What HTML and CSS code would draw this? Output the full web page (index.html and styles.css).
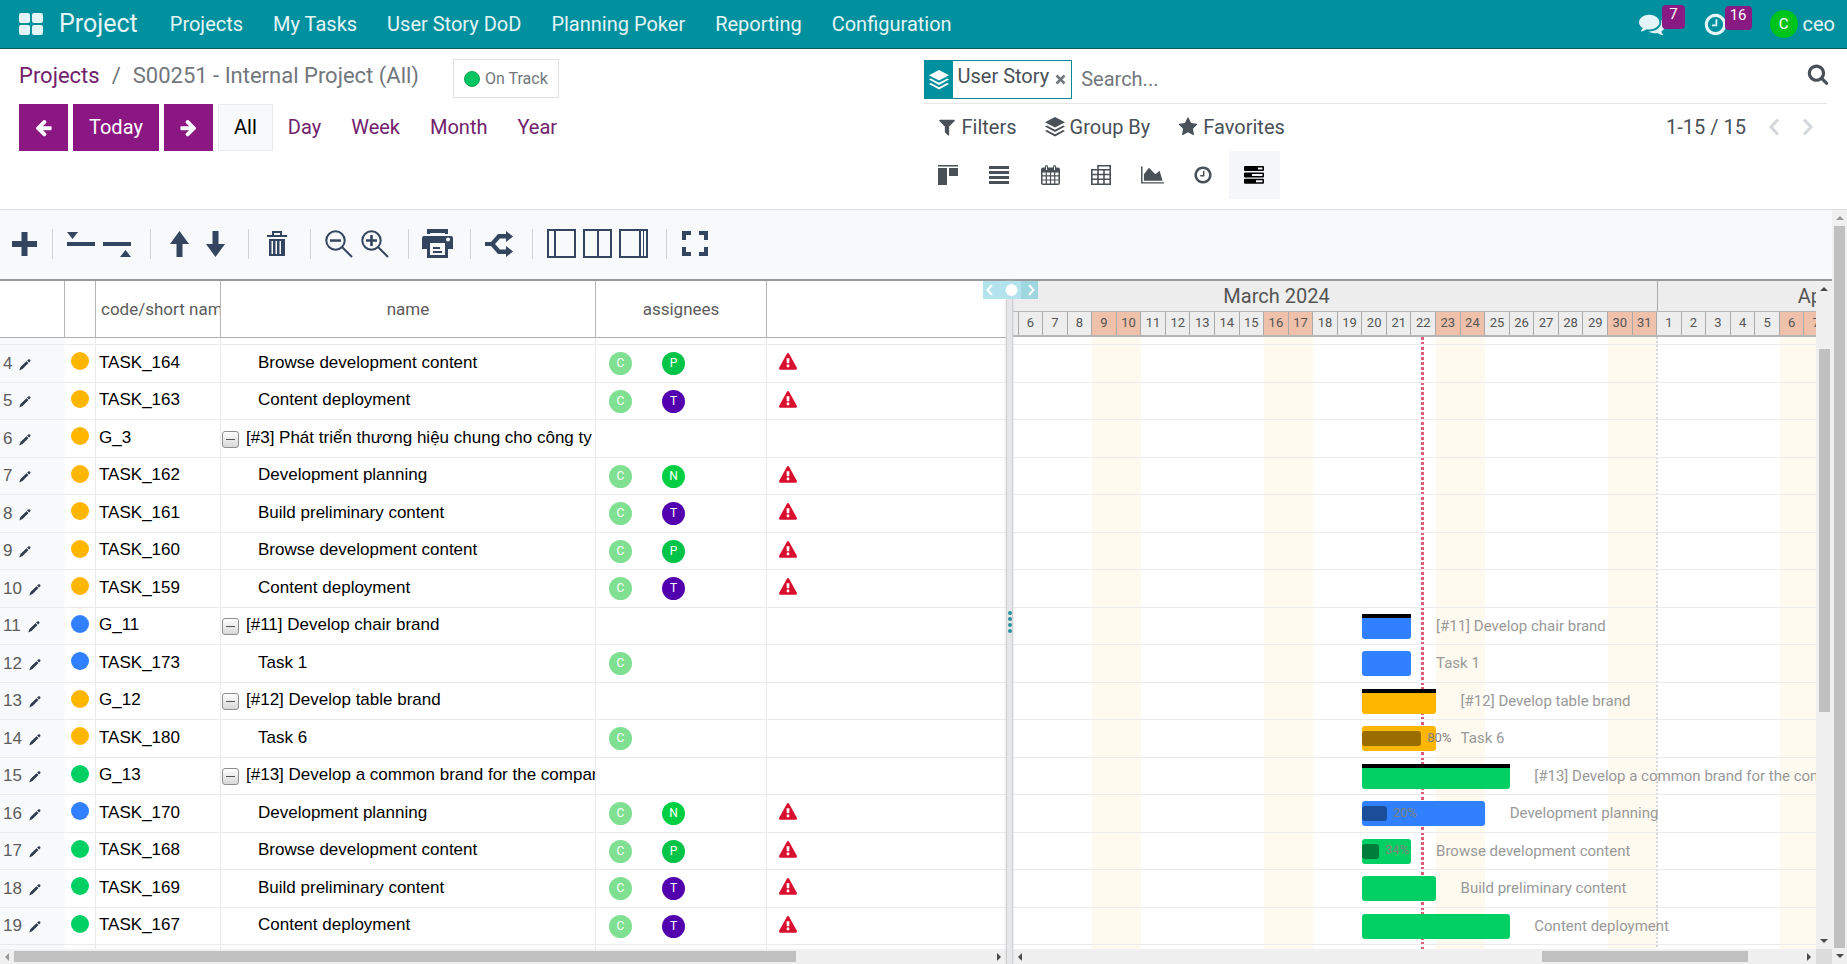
FILE: index.html
```html
<!DOCTYPE html>
<html lang="en">
<head>
<meta charset="utf-8">
<title>Project - S00251 - Internal Project</title>
<link rel="stylesheet" href="styles.css">
</head>
<body>
<svg class="sprite" aria-hidden="true">
  <symbol id="i-arrow" viewBox="0 0 1792 1792"><path d="M1664 896v128q0 53-32.5 90.5t-84.500 37.500h-704l293 294q38 36 38 90t-38 90l-75 76q-37 37-90 37-52 0-91-37l-651-652q-37-37-37-90 0-52 37-91l651-650q38-38 91-38 52 0 90 38l75 74q38 38 38 91t-38 91l-293 293h704q52 0 84.500 37.500t32.500 90.500z"/></symbol>
  <symbol id="i-layers" viewBox="0 0 20 20"><path d="M10 0L20 5.200 10 10.500 0 5.200z"/><path d="M1.800 8.600L0 9.600l10 5.300 10-5.300-1.800-1L10 12.800z"/><path d="M1.800 13L0 14l10 5.500L20 14l-1.800-1L10 17.300z"/></symbol>
  <symbol id="i-pencil" viewBox="0 0 12 12"><path d="M9.200.6q.9-.9 1.800 0t.1 1.900l-1 1-2-1.900zM7.500 2.200l2 1.900-6 6-3.200 1.500 1.200-3.500z"/></symbol>
  <symbol id="i-warn" viewBox="0 0 1792 1792"><path d="M1024 1375v-190q0-14-9.500-23.500t-22.500-9.500h-192q-13 0-22.500 9.500t-9.500 23.500v190q0 14 9.500 23.500t22.500 9.500h192q13 0 22.500-9.500t9.500-23.500zm-2-374l18-459q0-12-10-19-13-11-24-11h-220q-11 0-24 11-10 7-10 21l17 457q0 10 10 16.500t24 6.500h185q14 0 23.500-6.500t10.500-16.500zm-14-934l768 1408q35 63-2 126-17 29-46.500 46t-63.500 17h-1536q-34 0-63.500-17t-46.500-46q-37-63-2-126l768-1408q17-31 47-49t65-18 65 18 47 49z"/></symbol>
  <symbol id="i-clock" viewBox="0 0 1792 1792"><path d="M1024 544v448q0 14-9 23t-23 9h-320q-14 0-23-9t-9-23v-64q0-14 9-23t23-9h224v-352q0-14 9-23t23-9h64q14 0 23 9t9 23zm416 352q0-148-73-273t-198-198-273-73-273 73-198 198-73 273 73 273 198 198 273 73 273-73 198-198 73-273zm224 0q0 209-103 385.500t-279.500 279.500-385.500 103-385.500-103-279.500-279.500-103-385.500 103-385.500 279.500-279.500 385.500-103 385.500 103 279.500 279.500 103 385.500z"/></symbol>
  <symbol id="i-tri" viewBox="0 0 8 8"><path d="M6 0v8L2 4z"/></symbol>
</svg>

<header class="navbar">
  <button class="apps" aria-label="Home menu"><svg width="24" height="22" viewBox="0 0 24 22"><rect width="11" height="10" rx="2"/><rect x="13" width="11" height="10" rx="2"/><rect y="12" width="11" height="10" rx="2"/><rect x="13" y="12" width="11" height="10" rx="2"/></svg></button>
  <a class="brand" href="#">Project</a>
  <nav class="menu"><a href="#">Projects</a><a href="#">My Tasks</a><a href="#">User Story DoD</a><a href="#">Planning Poker</a><a href="#">Reporting</a><a href="#">Configuration</a></nav>
  <div class="systray">
    <button class="tray" aria-label="Messages"><svg width="26" height="26" viewBox="0 0 1792 1792"><path d="M1408 768q0 139-94 257t-256.500 186.500-353.500 68.500q-86 0-176-16-124 88-278 128-36 9-86 16h-3q-11 0-20.500-8t-11.500-21q-1-3-1-6.500t.5-6.500 2-6l2.500-5 3.500-5.500 4-5 4.500-5 4-4.500q5-6 23-25t26-29.500 22.500-29 25-38.500 20.500-44q-124-72-195-177t-71-224q0-139 94-257t256.500-186.500 353.500-68.500 353.500 68.500 256.500 186.500 94 257zm384 256q0 120-71 224.500t-195 176.500q10 24 20.500 44t25 38.500 22.500 29 26 29.500 23 25q1 1 4 4.500t4.500 5 4 5 3.500 5.500l2.500 5 2 6 .5 6.500-1 6.500q-3 14-13 22t-22 7q-50-7-86-16-154-40-278-128-90 16-176 16-271 0-472-132 58 4 88 4 161 0 309-45t264-129q125-92 192-212t67-254q0-77-23-152 129 71 204 178t75 230z"/></svg><span class="badge">7</span></button>
    <button class="tray" aria-label="Activities"><svg width="25" height="25"><use href="#i-clock"/></svg><span class="badge">16</span></button>
    <button class="user"><span class="avatar-me">C</span>ceo</button>
  </div>
</header>

<section class="control">
  <div class="control-left">
    <div class="crumbs"><a href="#">Projects</a><span class="slash">/</span><span>S00251 - Internal Project (All)</span><button class="status"><i></i>On Track</button></div>
    <div class="scales">
      <button class="primary" aria-label="Previous"><svg width="19" height="19"><use href="#i-arrow"/></svg></button>
      <button class="primary">Today</button>
      <button class="primary flip" aria-label="Next"><svg width="19" height="19"><use href="#i-arrow"/></svg></button>
      <div class="scale-group"><button class="scale active">All</button><button class="scale">Day</button><button class="scale">Week</button><button class="scale">Month</button><button class="scale">Year</button></div>
    </div>
  </div>
  <div class="control-right">
    <div class="search">
      <div class="facet"><span class="facet-icon"><svg width="20" height="20"><use href="#i-layers"/></svg></span><span class="facet-text">User Story</span><button class="facet-x" aria-label="Remove"><svg width="11" height="11" viewBox="0 0 11 11"><path d="M1.500 1.500l8 8m0-8l-8 8" stroke="currentColor" stroke-width="2.500"/></svg></button></div>
      <input type="text" placeholder="Search..." aria-label="Search">
      <button class="search-go" aria-label="Search"><svg width="22" height="22" viewBox="0 0 1792 1792"><path d="M1216 832q0-185-131.500-316.500t-316.500-131.500-316.500 131.500-131.500 316.500 131.500 316.500 316.500 131.500 316.500-131.500 131.500-316.500zm512 832q0 52-38 90t-90 38q-54 0-90-38l-343-342q-179 124-399 124-143 0-273.500-55.500t-225-150-150-225-55.500-273.500 55.500-273.500 150-225 225-150 273.500-55.500 273.500 55.500 225 150 150 225 55.500 273.500q0 220-124 399l343 343q37 37 37 90z"/></svg></button>
    </div>
    <div class="options">
      <button><svg width="20" height="20" viewBox="0 0 1792 1792"><path d="M1595 295q17 41-14 70l-493 493v742q0 42-39 59-13 5-25 5-27 0-45-19l-256-256q-19-19-19-45v-486l-493-493q-31-29-14-70 17-39 59-39h1280q42 0 59 39z"/></svg>Filters</button>
      <button><svg width="20" height="20"><use href="#i-layers"/></svg>Group By</button>
      <button><svg width="20" height="20" viewBox="0 0 1792 1792"><path d="M1728 647q0 22-26 48l-363 354 86 500q1 7 1 20 0 21-10.500 35.500t-30.500 14.500q-19 0-40-12l-449-236-449 236q-22 12-40 12-21 0-31.500-14.500t-10.500-35.500q0-6 2-20l86-500-364-354q-25-27-25-48 0-37 56-46l502-73 225-455q19-41 49-41t49 41l225 455 502 73q56 9 56 46z"/></svg>Favorites</button>
      <div class="pager"><span>1-15 / 15</span><button aria-label="Previous page"><svg width="12" height="18" viewBox="0 0 12 18"><path d="M10 1.500L3 9l7 7.500"/></svg></button><button aria-label="Next page"><svg width="12" height="18" viewBox="0 0 12 18"><path d="M2 1.500L9 9l-7 7.500"/></svg></button></div>
    </div>
    <div class="views">
      <button aria-label="Kanban"><svg width="20" height="20" viewBox="0 0 20 20"><path d="M0 0h20v1.500H0zM0 3h9v17H0zM11 3h9v8h-9z"/></svg></button>
      <button aria-label="List"><svg width="20" height="18" viewBox="0 0 20 18"><path d="M0 0h20v3H0zM0 5h20v3H0zM0 10h20v3H0zM0 15h20v3H0z"/></svg></button>
      <button aria-label="Calendar"><svg width="19" height="20" viewBox="0 0 19 20"><path fill-rule="evenodd" d="M2 2.500h2V1.500Q4 0 5.500 0T7 1.500v1h5v-1Q12 0 13.500 0T15 1.500v1h2q2 0 2 2V18q0 2-2 2H2q-2 0-2-2V4.500q0-2 2-2zM1.500 7.500v2.700h3.200V7.500zm4.400 0v2.700h3V7.500zm4.200 0v2.700h3V7.500zm4.200 0v2.700h3.200V7.500zM1.500 11.400v3h3.200v-3zm4.400 0v3h3v-3zm4.200 0v3h3v-3zm4.200 0v3h3.200v-3zM1.500 15.600v2.900h3.200v-2.900zm4.400 0v2.900h3v-2.900zm4.200 0v2.900h3v-2.900zm4.200 0v2.900h3.200v-2.900zM5 1.500V5h1V1.500zm8 0V5h1V1.500z"/></svg></button>
      <button aria-label="Pivot"><svg width="20" height="20" viewBox="0 0 20 20"><path d="M7 4.500V.8h12.200v18.400H.8V4.800h18.400M.8 9.500h18.400M.8 14.300h18.400M7 4.500v14.700M13 4.500v14.700" fill="none" stroke="currentColor" stroke-width="1.600"/></svg></button>
      <button aria-label="Graph"><svg width="23" height="20" viewBox="0 0 2048 1792"><path d="M2048 1536v128h-2048v-1536h128v1408h1920zm-384-1024l256 896h-1664v-576l448-576 576 576z"/></svg></button>
      <button aria-label="Activity"><svg width="20" height="20"><use href="#i-clock"/></svg></button>
      <button class="active" aria-label="Gantt"><svg width="20" height="18" viewBox="0 0 20 18"><path fill-rule="evenodd" d="M1 0h18q1 0 1 1v3q0 1-1 1H1q-1 0-1-1V1q0-1 1-1zm13 1.500v2h4.500v-2zM1 6.500h18q1 0 1 1v3q0 1-1 1H1q-1 0-1-1v-3q0-1 1-1zM8 8v2h10.500V8zM1 12.700h18q1 0 1 1v3q0 1-1 1H1q-1 0-1-1v-3q0-1 1-1zm11 1.500v2h6.500v-2z"/></svg></button>
    </div>
  </div>
</section>

<main class="work">
  <div class="gantt">
    <div class="toolbar">
      <button aria-label="Add"><svg width="25" height="24" viewBox="0 0 25 24"><path d="M9.500 0h6v9H25v6h-9.500v9h-6v-9H0V9h9.500z"/></svg></button>
      <hr>
      <button aria-label="Collapse"><svg width="28" height="26" viewBox="0 0 28 26"><path d="M0 1h11L5.500 8zM0 11h28v4H0z"/></svg></button>
      <button aria-label="Expand"><svg width="28" height="26" viewBox="0 0 28 26"><path d="M0 11h28v4H0zM17 26h11l-5.500-7z"/></svg></button>
      <hr>
      <button aria-label="Move up"><svg width="19" height="26" viewBox="0 0 19 26"><path d="M9.500 0L19 13h-6.500v13h-6V13H0z"/></svg></button>
      <button aria-label="Move down"><svg width="19" height="26" viewBox="0 0 19 26"><path d="M9.500 26L19 13h-6.500V0h-6v13H0z"/></svg></button>
      <hr>
      <button aria-label="Delete"><svg width="20" height="25" viewBox="0 0 20 25"><path fill-rule="evenodd" d="M5 0h10v4h5v2H0V4h5zm2 2v2h6V2zM2 8h16v17H2zm2.500 2v13H6V10zm4 0v13H10V10zm4 0v13H14V10z"/></svg></button>
      <hr>
      <button aria-label="Zoom out"><svg width="28" height="28" viewBox="0 0 28 28"><path class="line" d="M17 17l10 10"/><circle class="line" cx="10.500" cy="10.500" r="9.200"/><path d="M5 9.300h11v2.500H5z"/></svg></button>
      <button aria-label="Zoom in"><svg width="28" height="28" viewBox="0 0 28 28"><path class="line" d="M17 17l10 10"/><circle class="line" cx="10.500" cy="10.500" r="9.200"/><path d="M5 9.300h4.200V5h2.600v4.300H16v2.500h-4.200V16H9.200v-4.200H5z"/></svg></button>
      <hr>
      <button aria-label="Print"><svg width="31" height="29" viewBox="0 0 31 29"><path fill-rule="evenodd" d="M5 0h21v5h-3V4H8v1H5zM2 7h27q2 0 2 2v11h-5v9H5v-9H0V9q0-2 2-2zm24 1.500a2 2 0 1 0 .1 0zM8 14v12h15V14zM11 18h7v2h-7zM11 22h9v2h-9z"/></svg></button>
      <hr>
      <button aria-label="Dependencies"><svg width="28" height="26" viewBox="0 0 28 26"><path d="M0 11h6l7-8h8V0l7 5.500-7 5.500V7.500h-6L10 13l5 5.500h6V15l7 5.500-7 5.500v-3h-8l-7-8H0z"/></svg></button>
      <hr>
      <button aria-label="Grid only"><svg width="29" height="29" viewBox="0 0 29 29"><path class="line" d="M1 1h27v27H1zM8 1v27"/></svg></button>
      <button aria-label="Split"><svg width="29" height="29" viewBox="0 0 29 29"><path class="line" d="M1 1h27v27H1zM15 1v27"/></svg></button>
      <button aria-label="Chart only"><svg width="29" height="29" viewBox="0 0 29 29"><path class="line" d="M1 1h27v27H1z"/><path d="M20 1h2v27h-2zM24 1h1v27h-1z"/></svg></button>
      <hr>
      <button aria-label="Full screen"><svg width="26" height="25" viewBox="0 0 26 25"><path d="M0 0h9v4H4v5H0zM17 0h9v9h-4V4h-5zM0 16h4v5h5v4H0zM22 16h4v9h-9v-4h5z"/></svg></button>
    </div>

    <div class="split">
      <section class="pane">
        <div class="pane-body">
        <table class="grid">
          <colgroup><col class="c-num"><col class="c-dot"><col class="c-code"><col class="c-name"><col class="c-who"><col></colgroup>
          <thead><tr><th></th><th></th><th class="clip">code/short name</th><th>name</th><th>assignees</th><th></th></tr></thead>
          <tbody>
          <tr class="strip"><td></td><td></td><td></td><td></td><td></td><td></td></tr>
          <tr><td>4<svg><use href="#i-pencil"/></svg></td><td><i class="dot yellow"></i></td><td>TASK_164</td><td class="child">Browse development content</td><td><b class="av c">C</b><b class="av p">P</b></td><td><svg class="warn"><use href="#i-warn"/></svg></td></tr>
          <tr><td>5<svg><use href="#i-pencil"/></svg></td><td><i class="dot yellow"></i></td><td>TASK_163</td><td class="child">Content deployment</td><td><b class="av c">C</b><b class="av t">T</b></td><td><svg class="warn"><use href="#i-warn"/></svg></td></tr>
          <tr><td>6<svg><use href="#i-pencil"/></svg></td><td><i class="dot yellow"></i></td><td>G_3</td><td><button class="fold" aria-label="Collapse group"></button>[#3] Phát triển thương hiệu chung cho công ty</td><td></td><td></td></tr>
          <tr><td>7<svg><use href="#i-pencil"/></svg></td><td><i class="dot yellow"></i></td><td>TASK_162</td><td class="child">Development planning</td><td><b class="av c">C</b><b class="av n">N</b></td><td><svg class="warn"><use href="#i-warn"/></svg></td></tr>
          <tr><td>8<svg><use href="#i-pencil"/></svg></td><td><i class="dot yellow"></i></td><td>TASK_161</td><td class="child">Build preliminary content</td><td><b class="av c">C</b><b class="av t">T</b></td><td><svg class="warn"><use href="#i-warn"/></svg></td></tr>
          <tr><td>9<svg><use href="#i-pencil"/></svg></td><td><i class="dot yellow"></i></td><td>TASK_160</td><td class="child">Browse development content</td><td><b class="av c">C</b><b class="av p">P</b></td><td><svg class="warn"><use href="#i-warn"/></svg></td></tr>
          <tr><td>10<svg><use href="#i-pencil"/></svg></td><td><i class="dot yellow"></i></td><td>TASK_159</td><td class="child">Content deployment</td><td><b class="av c">C</b><b class="av t">T</b></td><td><svg class="warn"><use href="#i-warn"/></svg></td></tr>
          <tr><td>11<svg><use href="#i-pencil"/></svg></td><td><i class="dot blue"></i></td><td>G_11</td><td><button class="fold" aria-label="Collapse group"></button>[#11] Develop chair brand</td><td></td><td></td></tr>
          <tr><td>12<svg><use href="#i-pencil"/></svg></td><td><i class="dot blue"></i></td><td>TASK_173</td><td class="child">Task 1</td><td><b class="av c">C</b></td><td></td></tr>
          <tr><td>13<svg><use href="#i-pencil"/></svg></td><td><i class="dot yellow"></i></td><td>G_12</td><td><button class="fold" aria-label="Collapse group"></button>[#12] Develop table brand</td><td></td><td></td></tr>
          <tr><td>14<svg><use href="#i-pencil"/></svg></td><td><i class="dot yellow"></i></td><td>TASK_180</td><td class="child">Task 6</td><td><b class="av c">C</b></td><td></td></tr>
          <tr><td>15<svg><use href="#i-pencil"/></svg></td><td><i class="dot green"></i></td><td>G_13</td><td><button class="fold" aria-label="Collapse group"></button>[#13] Develop a common brand for the company</td><td></td><td></td></tr>
          <tr><td>16<svg><use href="#i-pencil"/></svg></td><td><i class="dot blue"></i></td><td>TASK_170</td><td class="child">Development planning</td><td><b class="av c">C</b><b class="av n">N</b></td><td><svg class="warn"><use href="#i-warn"/></svg></td></tr>
          <tr><td>17<svg><use href="#i-pencil"/></svg></td><td><i class="dot green"></i></td><td>TASK_168</td><td class="child">Browse development content</td><td><b class="av c">C</b><b class="av p">P</b></td><td><svg class="warn"><use href="#i-warn"/></svg></td></tr>
          <tr><td>18<svg><use href="#i-pencil"/></svg></td><td><i class="dot green"></i></td><td>TASK_169</td><td class="child">Build preliminary content</td><td><b class="av c">C</b><b class="av t">T</b></td><td><svg class="warn"><use href="#i-warn"/></svg></td></tr>
          <tr><td>19<svg><use href="#i-pencil"/></svg></td><td><i class="dot green"></i></td><td>TASK_167</td><td class="child">Content deployment</td><td><b class="av c">C</b><b class="av t">T</b></td><td><svg class="warn"><use href="#i-warn"/></svg></td></tr>
          <tr class="strip"><td></td><td></td><td></td><td></td><td></td><td></td></tr>
          </tbody>
        </table>
        </div>
        <div class="hbar"><svg class="faint"><use href="#i-tri"/></svg><div class="track"><i class="thumb" style="margin-left:0%;width:80%"></i></div><svg class="right"><use href="#i-tri"/></svg></div>
      </section>

      <div class="splitter"><div class="dots"><i></i><i></i><i></i><i></i></div>
        <div class="handle"><svg width="55" height="18" viewBox="0 0 55 18"><path fill="#b3e4ee" d="M0 0h38v18H0z"/><path fill="#9fd7e1" d="M38 0h17v18H38z"/><path class="chev" d="M9 4L4.500 9 9 14M46 4l4.500 5-4.500 5"/><circle cx="28.500" cy="9" r="6" fill="#fff"/></svg></div>
      </div>

      <section class="pane">
        <div class="chart-row">
          <div class="chart">
            <div class="canvas">
              <div class="months"><div class="march">March 2024</div><div class="april">April 2024</div></div>
              <div class="days"><span>5</span><span>6</span><span>7</span><span>8</span><span class="off">9</span><span class="off">10</span><span>11</span><span>12</span><span>13</span><span>14</span><span>15</span><span class="off">16</span><span class="off">17</span><span>18</span><span>19</span><span>20</span><span>21</span><span>22</span><span class="off">23</span><span class="off">24</span><span>25</span><span>26</span><span>27</span><span>28</span><span>29</span><span class="off">30</span><span class="off">31</span><span>1</span><span>2</span><span>3</span><span>4</span><span>5</span><span class="off">6</span><span class="off">7</span></div>
              <div class="plan">
                <div class="bands"><i style="grid-column:5/7"></i><i style="grid-column:12/14"></i><i style="grid-column:19/21"></i><i style="grid-column:26/28"></i><i style="grid-column:33/35"></i><i class="month-line" style="grid-column:28/29"></i><i class="today" style="grid-column:18/19"></i></div>
                <div class="rows">
                  <div class="row strip"></div>
                  <div class="row"></div><div class="row"></div><div class="row"></div><div class="row"></div><div class="row"></div><div class="row"></div><div class="row"></div>
                  <div class="row"><div class="bar blue group" style="grid-column:16/18"></div><span class="label" style="grid-column-start:19">[#11] Develop chair brand</span></div>
                  <div class="row"><div class="bar blue" style="grid-column:16/18"></div><span class="label" style="grid-column-start:19">Task 1</span></div>
                  <div class="row"><div class="bar yellow group" style="grid-column:16/19"></div><span class="label" style="grid-column-start:20">[#12] Develop table brand</span></div>
                  <div class="row"><div class="bar yellow" style="grid-column:16/19"><i style="width:80%"></i><small>80%</small></div><span class="label" style="grid-column-start:20">Task 6</span></div>
                  <div class="row"><div class="bar green group" style="grid-column:16/22"></div><span class="label" style="grid-column-start:23">[#13] Develop a common brand for the company</span></div>
                  <div class="row"><div class="bar blue" style="grid-column:16/21"><i style="width:20%"></i><small>20%</small></div><span class="label" style="grid-column-start:22">Development planning</span></div>
                  <div class="row"><div class="bar green" style="grid-column:16/18"><i style="width:34%"></i><small>34%</small></div><span class="label" style="grid-column-start:19">Browse development content</span></div>
                  <div class="row"><div class="bar green" style="grid-column:16/19"></div><span class="label" style="grid-column-start:20">Build preliminary content</span></div>
                  <div class="row"><div class="bar green" style="grid-column:16/22"></div><span class="label" style="grid-column-start:23">Content deployment</span></div>
                </div>
              </div>
            </div>
          </div>
          <div class="vbar"><svg class="up"><use href="#i-tri"/></svg><div class="track"><i class="thumb" style="margin-top:52px;height:57%"></i></div><svg class="down"><use href="#i-tri"/></svg></div>
        </div>
        <div class="hbar"><svg><use href="#i-tri"/></svg><div class="track"><i class="thumb" style="margin-left:66.500%;width:26.500%"></i></div><svg class="right"><use href="#i-tri"/></svg><i class="corner"></i></div>
      </section>
    </div>
  </div>
  <div class="vbar page"><svg class="up faint"><use href="#i-tri"/></svg><div class="track"><i class="thumb" style="margin-top:0;height:100%"></i></div><svg class="down"><use href="#i-tri"/></svg></div>
</main>
</body>
</html>
```

FILE: styles.css
```css
* { box-sizing: border-box; }
body { margin: 0; height: 100vh; display: flex; flex-direction: column; overflow: hidden; font: 20px/30px Roboto, sans-serif; color: #495057; background: #fff; }
button { font: inherit; color: inherit; background: none; border: 0; padding: 0; margin: 0; cursor: pointer; }
a { color: inherit; text-decoration: none; }
svg { display: block; fill: currentColor; flex: none; }
.sprite { position: absolute; width: 0; height: 0; }

/* Top navigation */
.navbar { flex: none; display: flex; align-items: center; height: 49px; background: #00909e; border-bottom: 1px solid #0d5c63; color: #e3f5f7; padding: 0 12px 0 19px; }
.brand { font-size: 25px; margin: 0 17px 0 16px; }
.menu { display: flex; flex: 1; }
.menu a { padding: 0 15px; }
.systray { display: flex; align-items: center; }
.tray { display: flex; align-items: center; margin-right: 18px; }
.badge { align-self: flex-start; background: #8a1a83; color: #fff; font-size: 15px; line-height: 18px; height: 24px; padding: 0 7px; margin: -6px 0 0 -3px; border-radius: 4px; }
.tray + .tray .badge { padding: 0 5px; }
.user { display: flex; align-items: center; gap: 5px; }
.avatar-me { width: 28px; height: 28px; border-radius: 50%; background: #00c41d; color: #fff; font-size: 15px; line-height: 28px; }

/* Control panel */
.control { flex: none; display: grid; grid-template-columns: 1fr 1fr; height: 161px; border-bottom: 1px solid #dcdcdc; }
.control-left { padding: 10px 0 0 19px; }
.crumbs { display: flex; align-items: center; font-size: 22px; color: #71777d; height: 39px; }
.crumbs > a, .crumbs > span { margin-top: -6px; }
.crumbs a, .scale { color: #71226c; }
.slash { padding: 0 12px; }
.status { display: flex; align-items: center; gap: 5px; height: 39px; margin-left: 34px; padding: 0 10px; border: 1px solid #dee2e6; font-size: 16px; }
.status i { width: 16px; height: 16px; border-radius: 50%; background: #00c561; border: 1px solid #12a555; }
.scales { display: flex; gap: 5px; margin-top: 6px; }
.primary { height: 47px; padding: 0 15px 1px; background: #8a1782; color: #fff; min-width: 49px; }
.primary:nth-child(2) { padding: 0 16px 2px; }
.flip svg { transform: scaleX(-1); }
.scale-group { display: flex; }
.scale { height: 47px; padding: 0 15px 2px; }
.scale.active { background: #f8f9fb; border: 1px solid #e9ecef; color: #000; min-width: 55px; }
.control-right { padding: 11px 20px 0 0; }
.search { display: flex; height: 44px; border-bottom: 1px solid #e3e5e8; }
.facet { display: flex; height: 39px; border: 1px solid #0a8893; }
.facet-icon { width: 28px; background: #00909e; color: #fff; display: flex; align-items: center; justify-content: center; }
.facet-text { padding: 0 6px 0 5px; }
.facet-x { color: #71777d; padding: 0 5px 0 0; }
.search input { flex: 1; min-width: 0; border: 0; outline: 0; font: inherit; height: 37px; padding: 0 9px; color: inherit; background: none; }
.search input::placeholder { color: #71777d; opacity: 1; }
.search-go { align-self: flex-start; padding-top: 3px; margin-right: -2px; }
.options { display: flex; align-items: center; height: 47px; padding: 0 13px 2px; gap: 28px; }
.options > button { display: flex; align-items: center; gap: 5px; }
.pager { display: flex; align-items: center; gap: 22px; margin-left: auto; }
.pager svg { fill: none; stroke: #d3d7db; stroke-width: 3; }
.views { display: flex; margin-left: -1px; }
.views button { width: 51px; height: 48px; display: flex; align-items: center; justify-content: center; }
.views .active { background: #f6f7fa; color: #000; }

/* Work area */
.work { flex: 1; min-height: 0; display: flex; }
.gantt { flex: 1; min-width: 0; display: flex; flex-direction: column; }
.toolbar { flex: none; display: flex; align-items: center; height: 71px; padding: 0 0 2px 11px; background: #f8f9fb; border-bottom: 2px solid #98999b; color: #34465f; }
.toolbar button { width: 36px; height: 30px; display: flex; align-items: center; justify-content: center; }
.toolbar button:first-child { width: 26px; }
.toolbar hr { width: 1px; height: 30px; margin: 0 10px 0 15px; border: 0; background: #d0d4d8; }
.line { fill: none; stroke: currentColor; stroke-width: 2; }
.split { flex: 1; min-height: 0; display: grid; grid-template-columns: 1006fr 7px 819fr; }
.pane { min-width: 0; min-height: 0; display: flex; flex-direction: column; }
.pane-body { flex: 1; min-height: 0; overflow: hidden; }

/* Task grid */
.grid { width: 100%; table-layout: fixed; border-spacing: 0; font: 17px/24px "Liberation Sans", Arial, sans-serif; color: #000; }
.c-num { width: 65px; }
.c-dot { width: 31px; }
.c-code { width: 125px; }
.c-name { width: 375px; }
.c-who { width: 171px; }
.grid th { height: 57px; padding: 0 4px; font: 17px/24px Roboto, sans-serif; color: #5c5c5c; border-right: 1px solid #b5b5b5; border-bottom: 1px solid #b0b0b0; overflow: hidden; white-space: nowrap; }
.grid th:last-child { border-right: 0; }
.grid .clip { text-align: left; padding-left: 5px; }
.grid td { height: 37px; padding: 0 0 2px 3px; border-right: 1px solid #ebebeb; border-bottom: 1px solid #e9eaeb; overflow: hidden; white-space: nowrap; }
.grid tr:nth-child(even) td { height: 38px; }
.grid td:last-child { border-right: 0; padding: 0 0 3px 12px; }
.grid tr.strip td { height: 7px; padding: 0; }
.grid td:first-child { background: #f8f9fb; color: #5c5c5c; padding: 0 0 0 3px; border-right-color: #f8f9fb; }
.grid td:first-child svg { display: inline-block; width: 12px; height: 12px; margin-left: 7px; vertical-align: -2px; color: #2f3a4d; }
.grid td:nth-child(2) { padding: 0 0 5px 6px; }
.grid td:nth-child(4) { padding-left: 1px; }
.grid td.child { padding-left: 37px; }
.grid td:nth-child(5) { padding: 0 0 1px 13px; }
.grid td:nth-child(5) b { vertical-align: middle; }
.dot { display: block; width: 18px; height: 18px; border-radius: 50%; }
.yellow { background: #ffb600; }
.blue { background: #3080ff; }
.green { background: #00d063; }
.av { display: inline-block; width: 23px; height: 23px; border-radius: 50%; margin-right: 30px; font: 12px/23px Roboto, sans-serif; color: #fff; text-align: center; }
.av.c { background: #80e092; }
.av.p { background: #00c447; }
.av.n { background: #00cf43; }
.av.t { background: #5200ad; }
.warn { width: 18px; height: 18px; color: #d90f2f; }
.fold { width: 17px; height: 17px; border: 1px solid #8e8e8e; border-radius: 3px; background: linear-gradient(#555, #555) center / 9px 1px no-repeat, linear-gradient(#fff, #d8d8d8); vertical-align: -4px; margin-right: 7px; }

/* Splitter */
.splitter { background: #e5e6e8; border: 1px solid #cfd1d4; border-width: 0 1px; box-shadow: 0 0 2px #c4c6c9; position: relative; display: flex; align-items: center; justify-content: center; z-index: 2; }
.dots { display: grid; gap: 2px; padding-bottom: 2px; }
.dots i { width: 4px; height: 4px; border-radius: 50%; background: #2a93a0; }
.handle { position: absolute; top: 0; left: -24px; }
.chev { fill: none; stroke: #fff; stroke-width: 2; }

/* Timeline */
.chart-row { flex: 1; min-height: 0; display: flex; }
.chart { flex: 1; min-width: 0; overflow: hidden; }
.canvas { width: 835px; margin-left: -19px; height: 100%; display: flex; flex-direction: column; }
.months { flex: none; display: flex; height: 31px; background: #ededed; border-bottom: 1px solid #b5b5b5; line-height: 31px; color: #555; text-align: center; }
.march { flex: none; width: 762px; margin-left: -98px; border-right: 1px solid #aaa; }
.april { flex: none; width: 370px; }
.days, .bands, .row { display: grid; grid-template-columns: repeat(34, 1fr); }
.days { flex: none; height: 25px; background: #ededed; border-bottom: 2px solid #b5b5b5; font-size: 13px; line-height: 22px; text-align: center; color: #555; }
.days span { border-right: 1px solid #aaa; min-width: 0; }
.days .off { background: #efc1ab; }
.plan { flex: 1; min-height: 0; position: relative; overflow: hidden; }
.bands { position: absolute; inset: 0; }
.bands i { grid-row: 1; background: #fffaf0; }
.bands .month-line { width: 2px; margin-left: -1px; background: repeating-linear-gradient(#d6d6d6 0 2px, transparent 2px 4px); }
.bands .today { width: 3px; justify-self: center; margin-right: 3px; background: repeating-linear-gradient(#db5f78 0 3px, transparent 3px 5px); }
.rows { position: relative; }
.row { height: 37px; border-bottom: 1px solid #ebebeb; align-items: center; }
.row:nth-child(even) { height: 38px; }
.row.strip { height: 8px; }
.bar { grid-row: 1; height: 25px; border-radius: 3px; display: flex; align-items: center; }
.group { border-top: 4px solid #000; border-radius: 0 0 3px 3px; }
.bar i { flex: none; height: 15px; border-radius: 3px; background: rgba(0, 0, 0, .4); }
.bar small { margin-left: 6px; font-size: 13px; line-height: 13px; padding-bottom: 3px; color: #808080; }
.label { grid-row: 1; width: 0; white-space: nowrap; font-size: 15px; line-height: 22px; padding-bottom: 1px; color: #999; }

/* Scroll bars */
.hbar { flex: none; display: flex; align-items: center; height: 15px; background: #f0f0f0; color: #4a4a4a; }
.hbar svg, .vbar svg { width: 8px; height: 8px; margin: 4px; }
.hbar svg { margin: 3px; }
.track { flex: 1; min-width: 0; min-height: 0; }
.hbar .thumb { display: block; height: 11px; background: #c0c0c0; }
.right { transform: scaleX(-1); }
.up { transform: rotate(90deg); }
.down { transform: rotate(-90deg); }
.hbar .faint, .vbar .faint { color: #999; }
.corner { width: 16px; align-self: stretch; background: #dcdcdc; }
.vbar { flex: none; display: flex; flex-direction: column; align-items: center; width: 16px; background: #f0f0f0; color: #4a4a4a; }
.vbar .thumb { display: block; width: 11px; background: #c0c0c0; }
.page { width: 15px; }
```
